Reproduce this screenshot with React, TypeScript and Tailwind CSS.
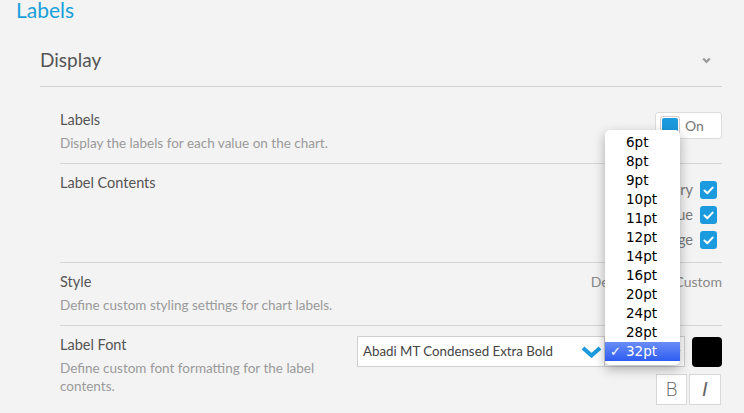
const SIZES = ["6pt", "8pt", "9pt", "10pt", "11pt", "12pt", "14pt", "16pt", "20pt", "24pt", "28pt", "32pt"];

function Check() {
  return (
    <span className="flex h-[18px] w-[17px] items-center justify-center rounded-[3px] bg-[#1b9ade]">
      <svg width="11" height="9" viewBox="0 0 11 9">
        <path d="M1.5 4.5 L4.3 7.2 L9.6 1.6" fill="none" stroke="#fff" strokeWidth="2" strokeLinecap="round" strokeLinejoin="round" />
      </svg>
    </span>
  );
}

function Row({
  title,
  desc,
  children,
  last,
}: {
  title: string;
  desc?: string;
  children?: React.ReactNode;
  last?: boolean;
}) {
  return (
    <div className={`flex items-start justify-between pt-[9px] pb-[11px] ${last ? "" : "border-b border-[#d6d6d6]"}`}>
      <div className="w-[285px]">
        <div className="text-[14.5px] leading-5 text-[#555]">{title}</div>
        {desc && <div className="mt-1 text-[13.5px] leading-[18px] text-[#9a9a9a]">{desc}</div>}
      </div>
      {children}
    </div>
  );
}

export default function App() {
  return (
    <div className="relative h-[413px] w-[744px] overflow-hidden bg-[#f3f3f3] font-['Lato',sans-serif]">
      <div className="pl-4 pr-[22px]">
        <h1 className="-mt-[2px] text-[21px] leading-6 text-[#1a9fd9]">Labels</h1>

        <div className="ml-6">
          {/* Section header */}
          <div className="mt-[26px] flex items-center justify-between border-b border-[#d0d0d0] pb-[14px]">
            <span className="text-[19px] leading-6 text-[#555]">Display</span>
            <svg width="9" height="7" viewBox="0 0 9 7" className="mr-[11px]">
              <path d="M1.2 1.5 L4.5 4.8 L7.8 1.5" fill="none" stroke="#9b9b9b" strokeWidth="2.4" />
            </svg>
          </div>

          <div className="ml-5 mt-[14px]">
            <Row title="Labels" desc="Display the labels for each value on the chart.">
              <div className="mt-[2px] flex h-[27px] w-[67px] items-center rounded-[3px] border border-[#dcdcdc] bg-white pl-[4px]">
                <span className="flex h-5 w-5 items-center justify-center rounded-[3px] border border-[#d9c9c9] bg-white">
                  <span className="h-4 w-4 rounded-[2px] bg-[#1b9ade]" />
                </span>
                <span className="ml-[5px] text-[14px] text-[#777]">On</span>
              </div>
            </Row>

            <Row title="Label Contents">
              <div className="mr-[5px] mt-2 flex flex-col items-end gap-[7px] pb-[2px]">
                {["Category", "Value", "Percentage"].map((l) => (
                  <div key={l} className="flex items-center gap-[7px] text-[14.5px] leading-[18px] text-[#777]">
                    {l}
                    <Check />
                  </div>
                ))}
              </div>
            </Row>

            <Row title="Style" desc="Define custom styling settings for chart labels.">
              <div className="flex items-center gap-[38px] text-[14px] leading-5 text-[#888]">
                <span>Default</span>
                <span>Custom</span>
              </div>
            </Row>

            <Row title="Label Font" desc="Define custom font formatting for the label contents." last>
              <div className="mt-[1px] flex flex-col items-end gap-[7px]">
                <div className="flex items-center">
                  <div className="flex h-[31px] w-[248px] items-center justify-between border border-[#cfcfcf] bg-white pl-[5px] pr-[2px] text-[13.3px] text-[#444]">
                    <span>Abadi MT Condensed Extra Bold</span>
                    <svg width="21" height="12" viewBox="0 0 21 12">
                      <path d="M2 2 L10.5 9.5 L19 2" fill="none" stroke="#1b9ade" strokeWidth="4" strokeLinejoin="miter" />
                    </svg>
                  </div>
                  <div className="flex h-[31px] w-[80px] items-center justify-end border border-l-0 border-[#cfcfcf] bg-white pr-[3px]">
                    <svg width="12" height="8" viewBox="0 0 12 8">
                      <path d="M1.5 1.5 L6 6 L10.5 1.5" fill="none" stroke="#1b9ade" strokeWidth="3" />
                    </svg>
                  </div>
                  <div className="ml-[7px] h-[30px] w-[30px] rounded-[4px] bg-black" />
                </div>
                <div className="flex gap-[2px] pr-[1px]">
                  <button className="h-[31px] w-[31px] border border-[#d8d8d8] bg-white font-['DejaVu_Sans',sans-serif] text-[19px] font-extralight text-[#666]">
                    B
                  </button>
                  <button className="h-[31px] w-[32px] border border-[#d8d8d8] bg-white font-['DejaVu_Sans',sans-serif] text-[19px] font-extralight italic text-[#666]">
                    I
                  </button>
                </div>
              </div>
            </Row>
          </div>
        </div>
      </div>

      {/* open size menu */}
      <div className="absolute left-[605px] top-[130px] w-[75px] rounded-[5px] bg-white pt-[3px] pb-[4px] font-['DejaVu_Sans',sans-serif] shadow-[0_4px_12px_rgba(0,0,0,0.3)]">
        {SIZES.map((s) => {
          const sel = s === "32pt";
          return (
            <div
              key={s}
              className={`flex h-[19px] items-center text-[13.5px] ${sel ? "bg-gradient-to-b from-[#6a8cf8] to-[#2f5cf0] text-white" : "text-black"}`}
            >
              <span className="w-[21px] pl-[5px] text-[13px]">{sel ? "✓" : ""}</span>
              {s}
            </div>
          );
        })}
      </div>
    </div>
  );
}
